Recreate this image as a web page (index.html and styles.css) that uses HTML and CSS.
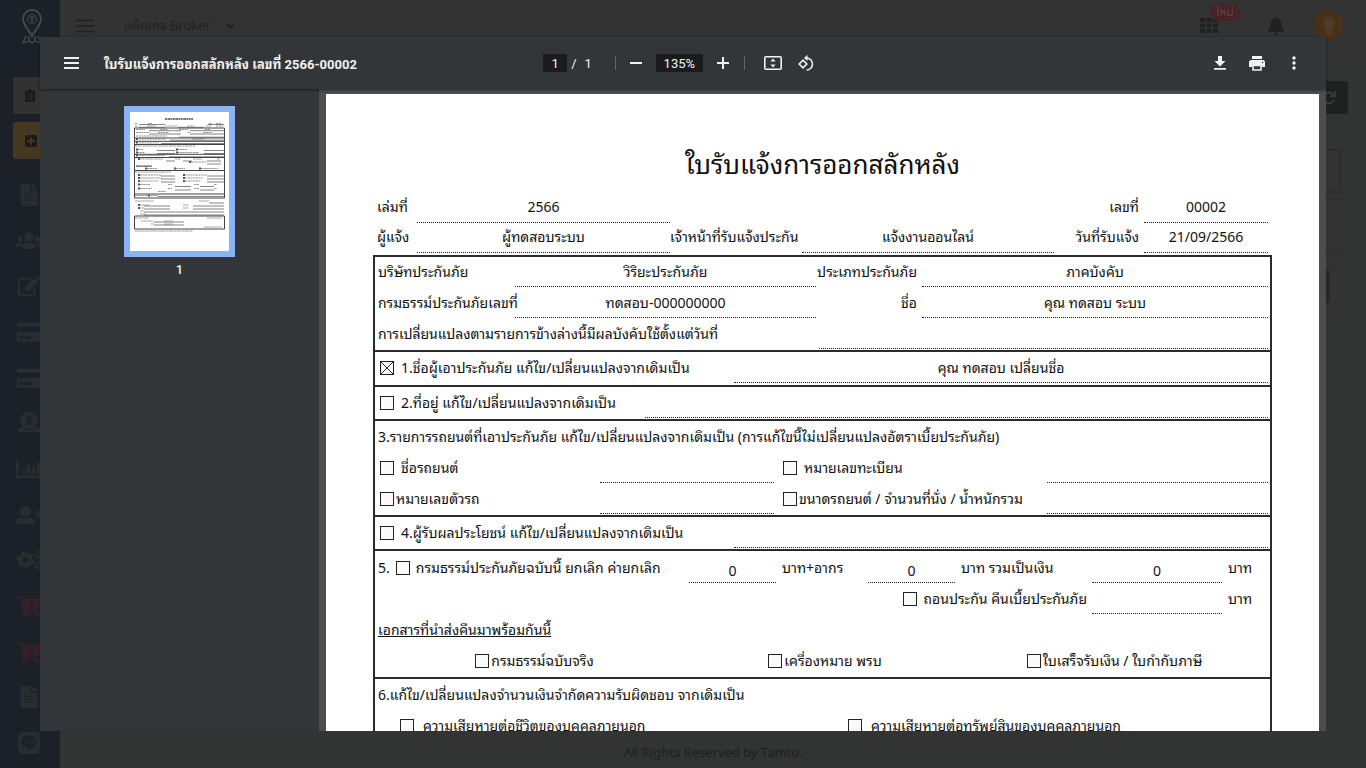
FILE: index.html
```html
<!DOCTYPE html>
<html lang="th">
<head>
<meta charset="utf-8">
<meta name="viewport" content="width=device-width, initial-scale=1">
<title>ใบรับแจ้งการออกสลักหลัง</title>
<link rel="stylesheet" href="styles.css">
</head>
<body>
<svg class="defs" aria-hidden="true">
  <symbol id="i-file" viewBox="0 0 384 512"><path d="M224 136V0H24C11 0 0 11 0 24v464c0 13 11 24 24 24h336c13 0 24-11 24-24V160H248c-13 0-24-11-24-24zm64 248H96v-24h192v24zm0-64H96v-24h192v24zm0-88v24H96v-24h192zm96-110v6H256V0h6c6 0 12 3 17 7l98 98c4 5 7 11 7 17z"/></symbol>
  <symbol id="i-card" viewBox="0 0 576 512"><path d="M0 432c0 27 21 48 48 48h480c27 0 48-21 48-48V256H0v176zm192-68c0-7 5-12 12-12h136c7 0 12 5 12 12v40c0 7-5 12-12 12H204c-7 0-12-5-12-12v-40zm-128 0c0-7 5-12 12-12h72c7 0 12 5 12 12v40c0 7-5 12-12 12H76c-7 0-12-5-12-12v-40zM576 80v48H0V80c0-27 21-48 48-48h480c27 0 48 21 48 48z"/></symbol>
  <symbol id="i-cart" viewBox="0 0 576 512"><path d="M504 317l47-208c4-15-8-29-23-29H159l-8-42C149 27 139 16 128 16H24C11 16 0 27 0 40v16c0 13 11 24 24 24h70l70 343a56 56 0 1 0 67 9h210a56 56 0 1 0 64-10l5-25c4-15-8-29-23-29H218l-7-32h270c11 0 21-8 23-19zM408 184v32h-48v48h-32v-48h-48v-32h48v-48h32v48z"/></symbol>
</svg>

<div class="app">
  <aside class="side">
    <a class="brand" href="#" aria-label="Tamto">
      <svg viewBox="0 0 24 36"><path d="M12 28C9 22 3 17 3 11a9 9 0 0 1 18 0c0 6-6 11-9 17z" fill="none" stroke="currentColor" stroke-width="2"/><circle cx="12" cy="11" r="4.500" fill="none" stroke="currentColor"/><path d="M9.500 8.500h5v1.200h-5zM10 10.500h4v1h-1.200V14h-1.600v-2.500H10z" fill="currentColor"/><path d="M6 28l-3 7 6-2 3 2 3-2 6 2-3-7M9 28v5M15 28v5" fill="none" stroke="currentColor" stroke-width="1.500"/></svg>
    </a>
    <button class="quick" aria-label="รายการ"><svg width="10" height="13" viewBox="0 0 10 13"><path d="M1 1.500h2.500a1.500 1.500 0 0 1 3 0H9l1 1V12l-1 1H1l-1-1V2.500z" fill="#191a1a"/><path d="M2 5.500h1M4.500 5.500H8M2 8h1M4.500 8H8M2 10.500h1M4.500 10.500H8" stroke="#323232"/></svg></button>
    <button class="quick add" aria-label="เพิ่ม"><svg width="12" height="12" viewBox="0 0 12 12"><rect width="12" height="12" rx="2" fill="#1d1b18"/><path d="M6 2.500v7M2.500 6h7" stroke="#463820" stroke-width="2"/></svg></button>
    <nav class="menu">
      <a href="#" aria-label="เอกสาร"><svg><use href="#i-file"/></svg></a>
      <a href="#" aria-label="ลูกค้า"><svg viewBox="0 0 26 18"><circle cx="13" cy="5" r="4.500"/><circle cx="4.500" cy="7" r="2.700"/><circle cx="21.500" cy="7" r="2.700"/><path d="M6.500 17v-3c0-2 2-3.500 4-3.500h5c2 0 4 1.500 4 3.500v3zM0 15v-2c0-1.500 1-2.500 2.500-2.500h4C5.500 11.500 5 13 5 15zM26 15v-2c0-1.500-1-2.500-2.500-2.500h-4c1 1 1.500 2.500 1.500 4.500z"/></svg></a>
      <a href="#" aria-label="แก้ไข"><svg viewBox="0 0 26 24"><path d="M16 4H4a2 2 0 0 0-2 2v14a2 2 0 0 0 2 2h13a2 2 0 0 0 2-2v-6" fill="none" stroke="currentColor" stroke-width="2.500"/><path d="M8 18l1-5L19 3l4 4-10 10zM20 2l2-2 4 4-2 2z"/></svg></a>
      <a href="#" aria-label="บัตร"><svg viewBox="0 0 576 512"><use href="#i-card"/></svg></a>
      <a href="#" aria-label="ชำระเงิน"><svg viewBox="0 0 576 512"><use href="#i-card"/></svg></a>
      <a href="#" aria-label="การเงิน"><svg viewBox="0 0 24 24"><path d="M2 17h3a9.500 9.500 0 0 0 14 0h3c1 0 2 1 2 2v3H0v-3c0-1 1-2 2-2z"/><circle cx="12" cy="9.500" r="9.500"/><path d="M15 6.500c-1-1.500-5.500-1.500-5.500.8 0 2.600 5.500 1.200 5.500 3.900 0 2.300-4.800 2.300-6 .3M12 3.500v12" fill="none" stroke="#1c2129" stroke-width="1.600"/></svg></a>
      <a href="#" aria-label="รายงาน"><svg viewBox="0 0 24 20"><path d="M0 2h2.500v14H24v2.500H0zM6 11h3v4H6zM10 6h3v9h-3zM14.500 8h3v7h-3zM19 4h3v11h-3z"/></svg></a>
      <a href="#" aria-label="เพิ่มผู้ใช้"><svg viewBox="0 0 28 20"><circle cx="10" cy="6" r="6"/><path d="M0 20v-3c0-3 3-4 5-4 3 1.500 7 1.500 10 0 2 0 5 1 5 4v3zM20 8h3V5h2.500v3h3v2.500h-3v3H23v-3h-3z"/></svg></a>
      <a href="#" aria-label="ตั้งค่า"><svg viewBox="0 0 28 22"><circle cx="10" cy="11" r="5.500" fill="none" stroke="currentColor" stroke-width="5"/><circle cx="10" cy="11" r="8.500" fill="none" stroke="currentColor" stroke-width="2.500" stroke-dasharray="4.500 4.400"/><circle cx="24" cy="5" r="3" fill="none" stroke="currentColor" stroke-width="3" stroke-dasharray="2 .8"/><circle cx="24" cy="17" r="3" fill="none" stroke="currentColor" stroke-width="3" stroke-dasharray="2 .8"/></svg></a>
      <a class="red" href="#" aria-label="ซื้อประกัน"><svg viewBox="0 0 576 512"><use href="#i-cart"/></svg></a>
      <a class="red" href="#" aria-label="ซื้อ พรบ"><svg viewBox="0 0 576 512"><use href="#i-cart"/></svg></a>
      <a href="#" aria-label="คู่มือ"><svg><use href="#i-file"/></svg></a>
      <a href="#" aria-label="LINE"><svg viewBox="0 0 20 20"><rect width="20" height="20" rx="4"/><path d="M10 3.500c-4 0-7 2.500-7 5.700 0 3 2.600 5.200 6 5.600v2.400c4-2 8-4.500 8-8 0-3.200-3-5.700-7-5.700z" fill="#1c2129"/><path d="M5.500 7.500v3H7M8.500 7.500v3M10 10.500v-3l2 3v-3M15 7.500h-1.500v3H15M13.500 9H15" fill="none" stroke="currentColor" stroke-width=".8"/></svg></a>
    </nav>
  </aside>

  <div class="main">
    <header class="top">
      <button class="icon" aria-label="เมนู"><svg width="18" height="14" viewBox="0 0 18 14"><path d="M0 1.500h18M0 7h18M0 12.500h18" stroke="currentColor" stroke-width="1.500"/></svg></button>
      <button class="pack">แพ็กเกจ Broker<svg width="9" height="6" viewBox="0 0 9 6"><path d="M1 1l3.500 3.500L8 1" fill="none" stroke="currentColor" stroke-width="2"/></svg></button>
      <div class="tools">
        <button class="icon apps" aria-label="แอป"><svg width="18" height="16" viewBox="0 0 18 16"><path d="M0 0h5v4H0zM6.500 0h5v4h-5zM13 0h5v4h-5zM0 5.500h5v4H0zM6.500 5.500h5v4h-5zM13 5.500h5v4h-5zM0 11h5v4H0zM6.500 11h5v4h-5zM13 11h5v4h-5z" fill="currentColor"/></svg><span class="badge">ใหม่</span></button>
        <button class="icon" aria-label="แจ้งเตือน"><svg width="16" height="18" viewBox="0 0 16 18"><path d="M8 0a1 1 0 0 1 1 1c3 .5 4.500 3 4.500 5.500 0 4 1 5.500 2.500 7v1.500H0v-1.500c1.500-1.500 2.500-3 2.500-7C2.500 4 4 1.500 7 1a1 1 0 0 1 1-1zM6 16h4a2 2 0 0 1-4 0z" fill="currentColor"/></svg></button>
        <button class="avatar" aria-label="บัญชี"><svg width="12" height="18" viewBox="0 0 12 18"><path d="M6 0a6 6 0 0 1 3 11v4l-1.500 3h-3L3 15v-4A6 6 0 0 1 6 0z" fill="#4e3c28"/></svg></button>
      </div>
    </header>
    <div class="content">
      <button class="refresh" aria-label="รีเฟรช"><svg width="14" height="14" viewBox="0 0 14 14"><path d="M12 9A5.500 5.500 0 1 1 11.500 4M13 0v5H8" fill="none" stroke="#3a3b3b" stroke-width="1.800"/></svg></button>
      <div class="panel">
        <div class="cell"><div class="field"></div></div>
        <div class="cell"></div>
        <div class="cell"><div class="pill"></div></div>
      </div>
    </div>
    <footer class="foot">All Rights Reserved by Tamto.</footer>
  </div>
</div>

<section class="viewer" role="dialog" aria-label="ใบรับแจ้งการออกสลักหลัง">
  <div class="bar">
    <div class="bar-left">
      <button class="tb" aria-label="เมนู"><svg width="15" height="12" viewBox="0 0 15 12"><path d="M0 1h15M0 6h15M0 11h15" stroke="currentColor" stroke-width="2"/></svg></button>
      <h1 class="name">ใบรับแจ้งการออกสลักหลัง เลขที่ 2566-00002</h1>
    </div>
    <div class="bar-mid">
      <input class="num" type="text" value="1" aria-label="หน้า"><span class="of">/</span><span>1</span>
      <span class="sep"></span>
      <button class="tb" aria-label="ซูมออก"><svg width="12" height="12" viewBox="0 0 12 12"><path d="M0 6h12" stroke="currentColor" stroke-width="2"/></svg></button>
      <input class="num zoom" type="text" value="135%" aria-label="ซูม">
      <button class="tb" aria-label="ซูมเข้า"><svg width="12" height="12" viewBox="0 0 12 12"><path d="M0 6h12M6 0v12" stroke="currentColor" stroke-width="2"/></svg></button>
      <span class="sep near"></span>
      <button class="tb fit" aria-label="พอดีหน้า"><svg width="18" height="14" viewBox="0 0 18 14"><rect x=".8" y=".8" width="16.400" height="12.400" rx="1" fill="none" stroke="currentColor" stroke-width="1.600"/><path d="M9 2.500L11.500 5.500h-5zM9 11.500L6.500 8.500h5z" fill="currentColor"/></svg></button>
      <button class="tb" aria-label="หมุน"><svg width="17" height="17" viewBox="0 0 17 17"><path d="M8.500 3a6 6 0 1 1 0 12" fill="none" stroke="currentColor" stroke-width="1.600"/><path d="M9.500 0v6L6 3z" fill="currentColor"/><path d="M1.200 9L5 5.200 8.800 9 5 12.800z" fill="none" stroke="currentColor" stroke-width="1.600"/></svg></button>
    </div>
    <div class="bar-right">
      <button class="tb" aria-label="ดาวน์โหลด"><svg width="12" height="14" viewBox="0 0 12 14"><path d="M4 0h4v5h3.500L6 10.500.5 5H4zM0 12h12v1.800H0z" fill="currentColor"/></svg></button>
      <button class="tb" aria-label="พิมพ์"><svg width="16" height="15" viewBox="0 0 16 15"><path d="M3 0h10v3H3zM2 4h12c1 0 2 1 2 2v5h-3V9H3v2H0V6c0-1 1-2 2-2z" fill="currentColor"/><path d="M4 9.500h8v4.500H4z" fill="none" stroke="currentColor" stroke-width="1.600"/><circle cx="13.500" cy="6.500" r=".8" fill="#323639"/></svg></button>
      <button class="tb more" aria-label="เพิ่มเติม"><svg width="4" height="14" viewBox="0 0 4 14"><circle cx="2" cy="2" r="1.700" fill="currentColor"/><circle cx="2" cy="7" r="1.700" fill="currentColor"/><circle cx="2" cy="12" r="1.700" fill="currentColor"/></svg></button>
    </div>
  </div>
  <div class="body">
    <div class="thumbs">
      <button class="thumb" aria-label="หน้า 1">
        <svg viewBox="0 0 99 139" fill="none">
          <g stroke="#999" stroke-dasharray="2 .5 3 .4 1.500 .5">
            <path d="M35 7h28" stroke-width="1.800" stroke="#777"/>
            <path d="M5 11.500h3M18 11.500h4M79 11.500h3M86 11.500h5M5 14h3M17 14h9M35 14h12M57 14h8M76 14h5M86 14h7M6 17.500h9M30 17.500h8M49 17.500h9M75 17.500h5M6 20.500h13M28 20.500h11M58 20.500h2M73 20.500h9M6 24h31M9 27h27M62 27h12M9 31h20M5 34h60M8 37.500h5M47 37.500h10M7 40.500h8M47 40.500h22M9 43.500h26M9 47h24M45 47h6M63 47h9M87 47h3M61 50h16M6 53.500h16M17 56.500h10M46 56.500h9M71 56.500h17M5 60h36M10 63h22M55 63h22M10 66h22M55 66h18M10 69h19M55 69h16M10 72.500h10M38 72.500h4M64 72.500h5M84 72.500h3M10 76.500h12M38 76.500h4M64 76.500h5M84 76.500h3M28 79.500h8M5 83.500h23M5 89h19M69 89h10M9 93h10M53 93h6M9 96h5M53 96h5M10 99h4M10 102h6M5 106h14M77 106h16M11 109h12M34 109h9M21 112h3M34 112h9M74 115h18M5 119h58" stroke-width="1"/>
          </g>
          <path d="M9 12.500h26M78 12.500h16M9 15.300h26M48 15.300h26M19 18.700h32M60 18.700h34M19 22h32M60 22h34M49 25.200h45M40 28.200h54M31 31.500h63M27 38.500h18M74 38.500h20M27 41.500h18M74 41.500h20M39 44.800h55M36 49h9M53 49h9M77 49h14M77 52h14M6 54.500h16M31 64h14M77 64h17M31 67h14M77 67h17M31 70h14M77 70h17M45 74.500h16M70 74.500h14M45 78h16M70 78h14M28 84.500h66M79 91h15M14 94h26M63 94h31M14 97h26M63 97h31M14 100h80M14 103h80M24 110h30M24 113h30" stroke="#666" stroke-width=".8"/>
          <path d="M4.500 16h90v70h-90zM4.500 26h90M4.500 29.300h90M4.500 32.500h90M4.500 42.300h90M4.500 45.500h90M4.500 58.500h90M4.500 82h90M4.500 104h90v13h-90z" stroke="#444"/>
          <path d="M6 27h2M6 30.500h2M6 37.500h2M46 37.500h2M6 40.500h2M46 40.500h2M6 43.500h2M8 47h2M59 50h2M15 56.500h2M44 56.500h2M69 56.500h2M8 63h2M53 63h2M8 66h2M53 66h2M8 69h2M53 69h2M8 72.500h2M8 76.500h2M18 83.500h2M8 93h2M8 96h2" stroke="#555" stroke-width="1.800"/>
        </svg>
      </button>
      <span class="page-no">1</span>
    </div>
    <div class="stage">
      <article class="sheet">
        <h2 class="title">ใบรับแจ้งการออกสลักหลัง</h2>
        <div class="row head c-a"><span>เล่มที่</span><output>2566</output><span class="r">เลขที่</span><output>00002</output></div>
        <div class="row head c-b"><span>ผู้แจ้ง</span><output>ผู้ทดสอบระบบ</output><span class="r">เจ้าหน้าที่รับแจ้งประกัน</span><output>แจ้งงานออนไลน์</output><span class="r">วันที่รับแจ้ง</span><output>21/09/2566</output></div>

        <div class="form">
          <section class="box lead">
            <div class="row c-c"><span>บริษัทประกันภัย</span><output>วิริยะประกันภัย</output><span class="r">ประเภทประกันภัย</span><output>ภาคบังคับ</output></div>
            <div class="row c-c"><span>กรมธรรม์ประกันภัยเลขที่</span><output>ทดสอบ-000000000</output><span class="r">ชื่อ</span><output>คุณ ทดสอบ ระบบ</output></div>
            <div class="row c-d"><span>การเปลี่ยนแปลงตามรายการข้างล่างนี้มีผลบังคับใช้ตั้งแต่วันที่</span><output></output></div>
          </section>
          <section class="box first">
            <div class="row c-e"><label class="ck"><input type="checkbox" checked>1.ชื่อผู้เอาประกันภัย แก้ไข/เปลี่ยนแปลงจากเดิมเป็น</label><output>คุณ ทดสอบ เปลี่ยนชื่อ</output></div>
          </section>
          <section class="box">
            <div class="row c-f"><label class="ck"><input type="checkbox">2.ที่อยู่ แก้ไข/เปลี่ยนแปลงจากเดิมเป็น</label><output></output></div>
          </section>
          <section class="box">
            <div class="row"><span>3.รายการรถยนต์ที่เอาประกันภัย แก้ไข/เปลี่ยนแปลงจากเดิมเป็น (การแก้ไขนี้ไม่เปลี่ยนแปลงอัตราเบี้ยประกันภัย)</span></div>
            <div class="row c-g"><label class="ck"><input type="checkbox">ชื่อรถยนต์</label><output></output><label class="ck in"><input type="checkbox">หมายเลขทะเบียน</label><output></output></div>
            <div class="row c-g"><label class="ck tight"><input type="checkbox">หมายเลขตัวรถ</label><output></output><label class="ck in tight"><input type="checkbox">ขนาดรถยนต์ / จำนวนที่นั่ง / น้ำหนักรวม</label><output></output></div>
          </section>
          <section class="box">
            <div class="row c-e"><label class="ck"><input type="checkbox">4.ผู้รับผลประโยชน์ แก้ไข/เปลี่ยนแปลงจากเดิมเป็น</label><output></output></div>
          </section>
          <section class="box money">
            <div class="row c-h"><label class="ck no">5.<input type="checkbox">กรมธรรม์ประกันภัยฉบับนี้ ยกเลิก ค่ายกเลิก</label><output class="low">0</output><span class="l">บาท+อากร</span><output class="low">0</output><span class="l">บาท รวมเป็นเงิน</span><output class="low">0</output><span class="l">บาท</span></div>
            <div class="row c-i"><label class="ck r"><input type="checkbox">ถอนประกัน คืนเบี้ยประกันภัย</label><output></output><span class="l">บาท</span></div>
            <div class="row"><span class="u">เอกสารที่นำส่งคืนมาพร้อมกันนี้</span></div>
            <div class="row c-j"><label class="ck tight mid"><input type="checkbox">กรมธรรม์ฉบับจริง</label><label class="ck tight mid"><input type="checkbox">เครื่องหมาย พรบ</label><label class="ck tight mid"><input type="checkbox">ใบเสร็จรับเงิน / ใบกำกับภาษี</label></div>
          </section>
          <section class="box">
            <div class="row"><span>6.แก้ไข/เปลี่ยนแปลงจำนวนเงินจำกัดความรับผิดชอบ จากเดิมเป็น</span></div>
            <div class="row c-k"><label class="ck deep"><input type="checkbox">ความเสียหายต่อชีวิตของบุคคลภายนอก</label><label class="ck deep"><input type="checkbox">ความเสียหายต่อทรัพย์สินของบุคคลภายนอก</label></div>
          </section>
        </div>
      </article>
    </div>
  </div>
</section>
</body>
</html>
```
FILE: styles.css
```css
* { box-sizing: border-box; }
body {
  margin: 0;
  font-family: "Noto Sans", "Noto Sans Thai", sans-serif;
  background: #323433;
  color: #222;
}
button { border: 0; padding: 0; margin: 0; background: none; color: inherit; font: inherit; }
svg { display: block; }
.defs { display: none; }

/* application behind the viewer */
.app { display: flex; height: 100vh; overflow: hidden; }
.side {
  flex: 0 0 60px;
  display: flex;
  flex-direction: column;
  padding-bottom: 2px;
  background: #1c2129;
  color: #2a2d30;
}
.brand { height: 55px; margin-bottom: 22px; display: flex; justify-content: center; padding: 8px 0 0 4px; background: #1c2129; color: #454748; }
.brand svg { width: 24px; height: 36px; }
.quick { height: 37px; margin: 0 0 8px 13px; padding-left: 12px; background: #323232; border-radius: 3px 0 0 3px; display: flex; align-items: center; }
.quick.add { background: #463820; margin-bottom: 13px; }
.menu { flex: 1; display: flex; flex-direction: column; min-height: 0; }
.menu a { flex: 1; display: flex; align-items: center; padding-left: 16px; color: inherit; min-height: 0; }
.menu svg { width: 26px; height: 22px; fill: currentColor; }
.menu .red { color: #352125; }
.main { flex: 1; min-width: 0; display: flex; flex-direction: column; }
.top { height: 55px; display: flex; align-items: center; padding: 0 23px 4px 16px; background: #333; }
.icon { position: relative; color: #202020; }
.pack { display: flex; align-items: center; gap: 15px; margin-left: 30px; font-size: 13px; }
.tools { margin-left: auto; display: flex; align-items: center; gap: 50px; }
.tools .avatar { margin-left: -20px; }
.badge { position: absolute; left: 10px; top: -14px; width: 30px; height: 17px; border-radius: 9px; background: #482226; color: #5f4143; font-size: 12px; line-height: 16px; text-align: center; }
.avatar { width: 29px; height: 29px; border-radius: 50%; background: #4a3019; display: grid; place-items: center; }
.content { flex: 1; padding: 26px 18px 0; display: flex; flex-direction: column; align-items: flex-end; gap: 26px; }
.refresh { width: 38px; height: 33px; border-radius: 3px; background: #1f2121; display: grid; place-items: center; }
.panel { align-self: stretch; background: #333; }
.cell { height: 52px; padding: 9px 7px; border-bottom: 1px solid #2e2f2f; display: flex; }
.cell:first-child { height: 60px; }
.cell:last-child { height: 64px; border: 0; justify-content: flex-end; padding: 18px; }
.field { flex: 1; height: 42px; border: 1px solid #282828; border-radius: 3px; }
.pill { width: 38px; height: 33px; border-radius: 3px; background: #262727; }
.foot { height: 37px; padding-top: 11px; text-align: center; font-size: 13px; line-height: 20px; color: #1f2020; }

/* document viewer */
.viewer { position: fixed; inset: 37px 40px; display: flex; flex-direction: column; color: #f1f1f1; background: #4b4e51; }
.bar {
  flex: 0 0 52px;
  display: grid;
  grid-template-columns: minmax(0, 1fr) auto minmax(0, 1fr);
  align-items: center;
  background: #323639;
  box-shadow: 0 1px 3px rgba(0, 0, 0, .5);
  z-index: 1;
  font: 13px Roboto, "Noto Sans Thai Looped", "Noto Sans Thai", sans-serif;
}
.bar-left { display: flex; align-items: center; gap: 25px; padding-left: 24px; }
.name { margin: 0; font-size: 13px; font-weight: 700; white-space: nowrap; }
.bar-mid { display: flex; align-items: center; margin-right: 8px; }
.num { width: 24px; height: 18px; border: 0; padding: 0; background: #191b1c; color: inherit; font: inherit; text-align: center; }
.num.zoom { width: 47px; margin: 0 14px; }
.of { margin: 0 8px 0 4px; }
.sep { width: 1px; height: 14px; margin: 0 14px 0 23px; background: #62666a; }
.sep.near { margin: 0 19px 0 15px; }
.fit { margin-right: 16px; }
.bar-right { display: flex; align-items: center; justify-content: flex-end; gap: 23px; padding-right: 30px; }
.bar-right .more { margin-left: 4px; }
.body { flex: 1; min-height: 0; display: flex; overflow: hidden; }
.thumbs { flex: 0 0 279px; display: flex; flex-direction: column; align-items: center; padding-top: 17px; background: #323639; }
.thumb { width: 111px; padding: 6px; background: #8ab4f8; }
.thumb svg { width: 100%; background: #fff; }
.page-no { font: 500 13px/25px Roboto, sans-serif; }
.stage { flex: 1; min-width: 0; padding: 5px 7px 0; overflow: hidden; }

/* paper form */
.sheet {
  min-height: 1400px;
  padding: 46px 47px;
  background: #fff;
  color: #111;
  font-family: "Noto Sans", "Noto Sans Thai Looped", Sarabun, Loma, Waree, "Noto Sans Thai", sans-serif;
  font-size: 14px;
}
.title { margin: 0 0 5px; text-align: center; font-size: 26px; line-height: 48px; font-weight: 400; }
.form { margin-top: 2px; border: solid #2b2b2b; border-width: 0 2px; }
.box { border-top: 2px solid #2b2b2b; padding-top: 1px; }
.box.lead { padding-top: 0; }
.box.first { padding-bottom: 1px; }
.box.money { padding-top: 2px; }
.row { display: grid; height: 31px; padding: 0 2px 0 3px; white-space: nowrap; line-height: 30px; }
.lead .row { line-height: 29px; }
.row.head { padding: 0 4px; height: 30px; line-height: 28px; }
.row > * { min-width: 0; }
.row output { height: 30px; border-bottom: 1px dotted #222; text-align: center; }
.row .low { line-height: 35px; }
.r { text-align: right; padding-right: 5px; }
.l { padding-left: 6px; }
.c-a { grid-template-columns: 40fr 253fr 474fr 124fr; }
.c-b { grid-template-columns: 40fr 253fr 132fr 252fr 90fr 124fr; }
.c-c { grid-template-columns: 137fr 301fr 106fr 346fr; }
.c-d { grid-template-columns: 441fr 449fr; }
.c-e { grid-template-columns: 356fr 534fr; }
.c-f { grid-template-columns: 267fr 623fr; }
.c-g { grid-template-columns: 222fr 174fr 273fr 221fr; }
.c-h { grid-template-columns: 311fr 87fr 92fr 87fr 137fr 130fr 46fr; }
.c-i { grid-template-columns: 714fr 130fr 46fr; }
.c-j { grid-template-columns: 311fr 270fr 309fr; }
.c-k { grid-template-columns: 448fr 442fr; }
.ck { display: flex; align-items: center; gap: 7px; height: 30px; padding-left: 2px; }
.ck.no { padding-left: 0; gap: 6px; }
.ck.tight { gap: 2px; }
.ck.in { padding-left: 9px; }
.ck.deep { padding-left: 22px; gap: 9px; }
.ck.r { justify-content: flex-end; }
.ck.mid { justify-content: center; }
.ck input { appearance: none; flex: none; width: 14px; height: 14px; margin: 0; border: 1px solid #222; background: #fafafa; }
.ck input:checked {
  background:
    linear-gradient(45deg, transparent 47%, #222 47%, #222 53%, transparent 53%),
    linear-gradient(-45deg, transparent 47%, #222 47%, #222 53%, transparent 53%);
}
.u { text-decoration: underline; text-decoration-skip-ink: none; }
```
